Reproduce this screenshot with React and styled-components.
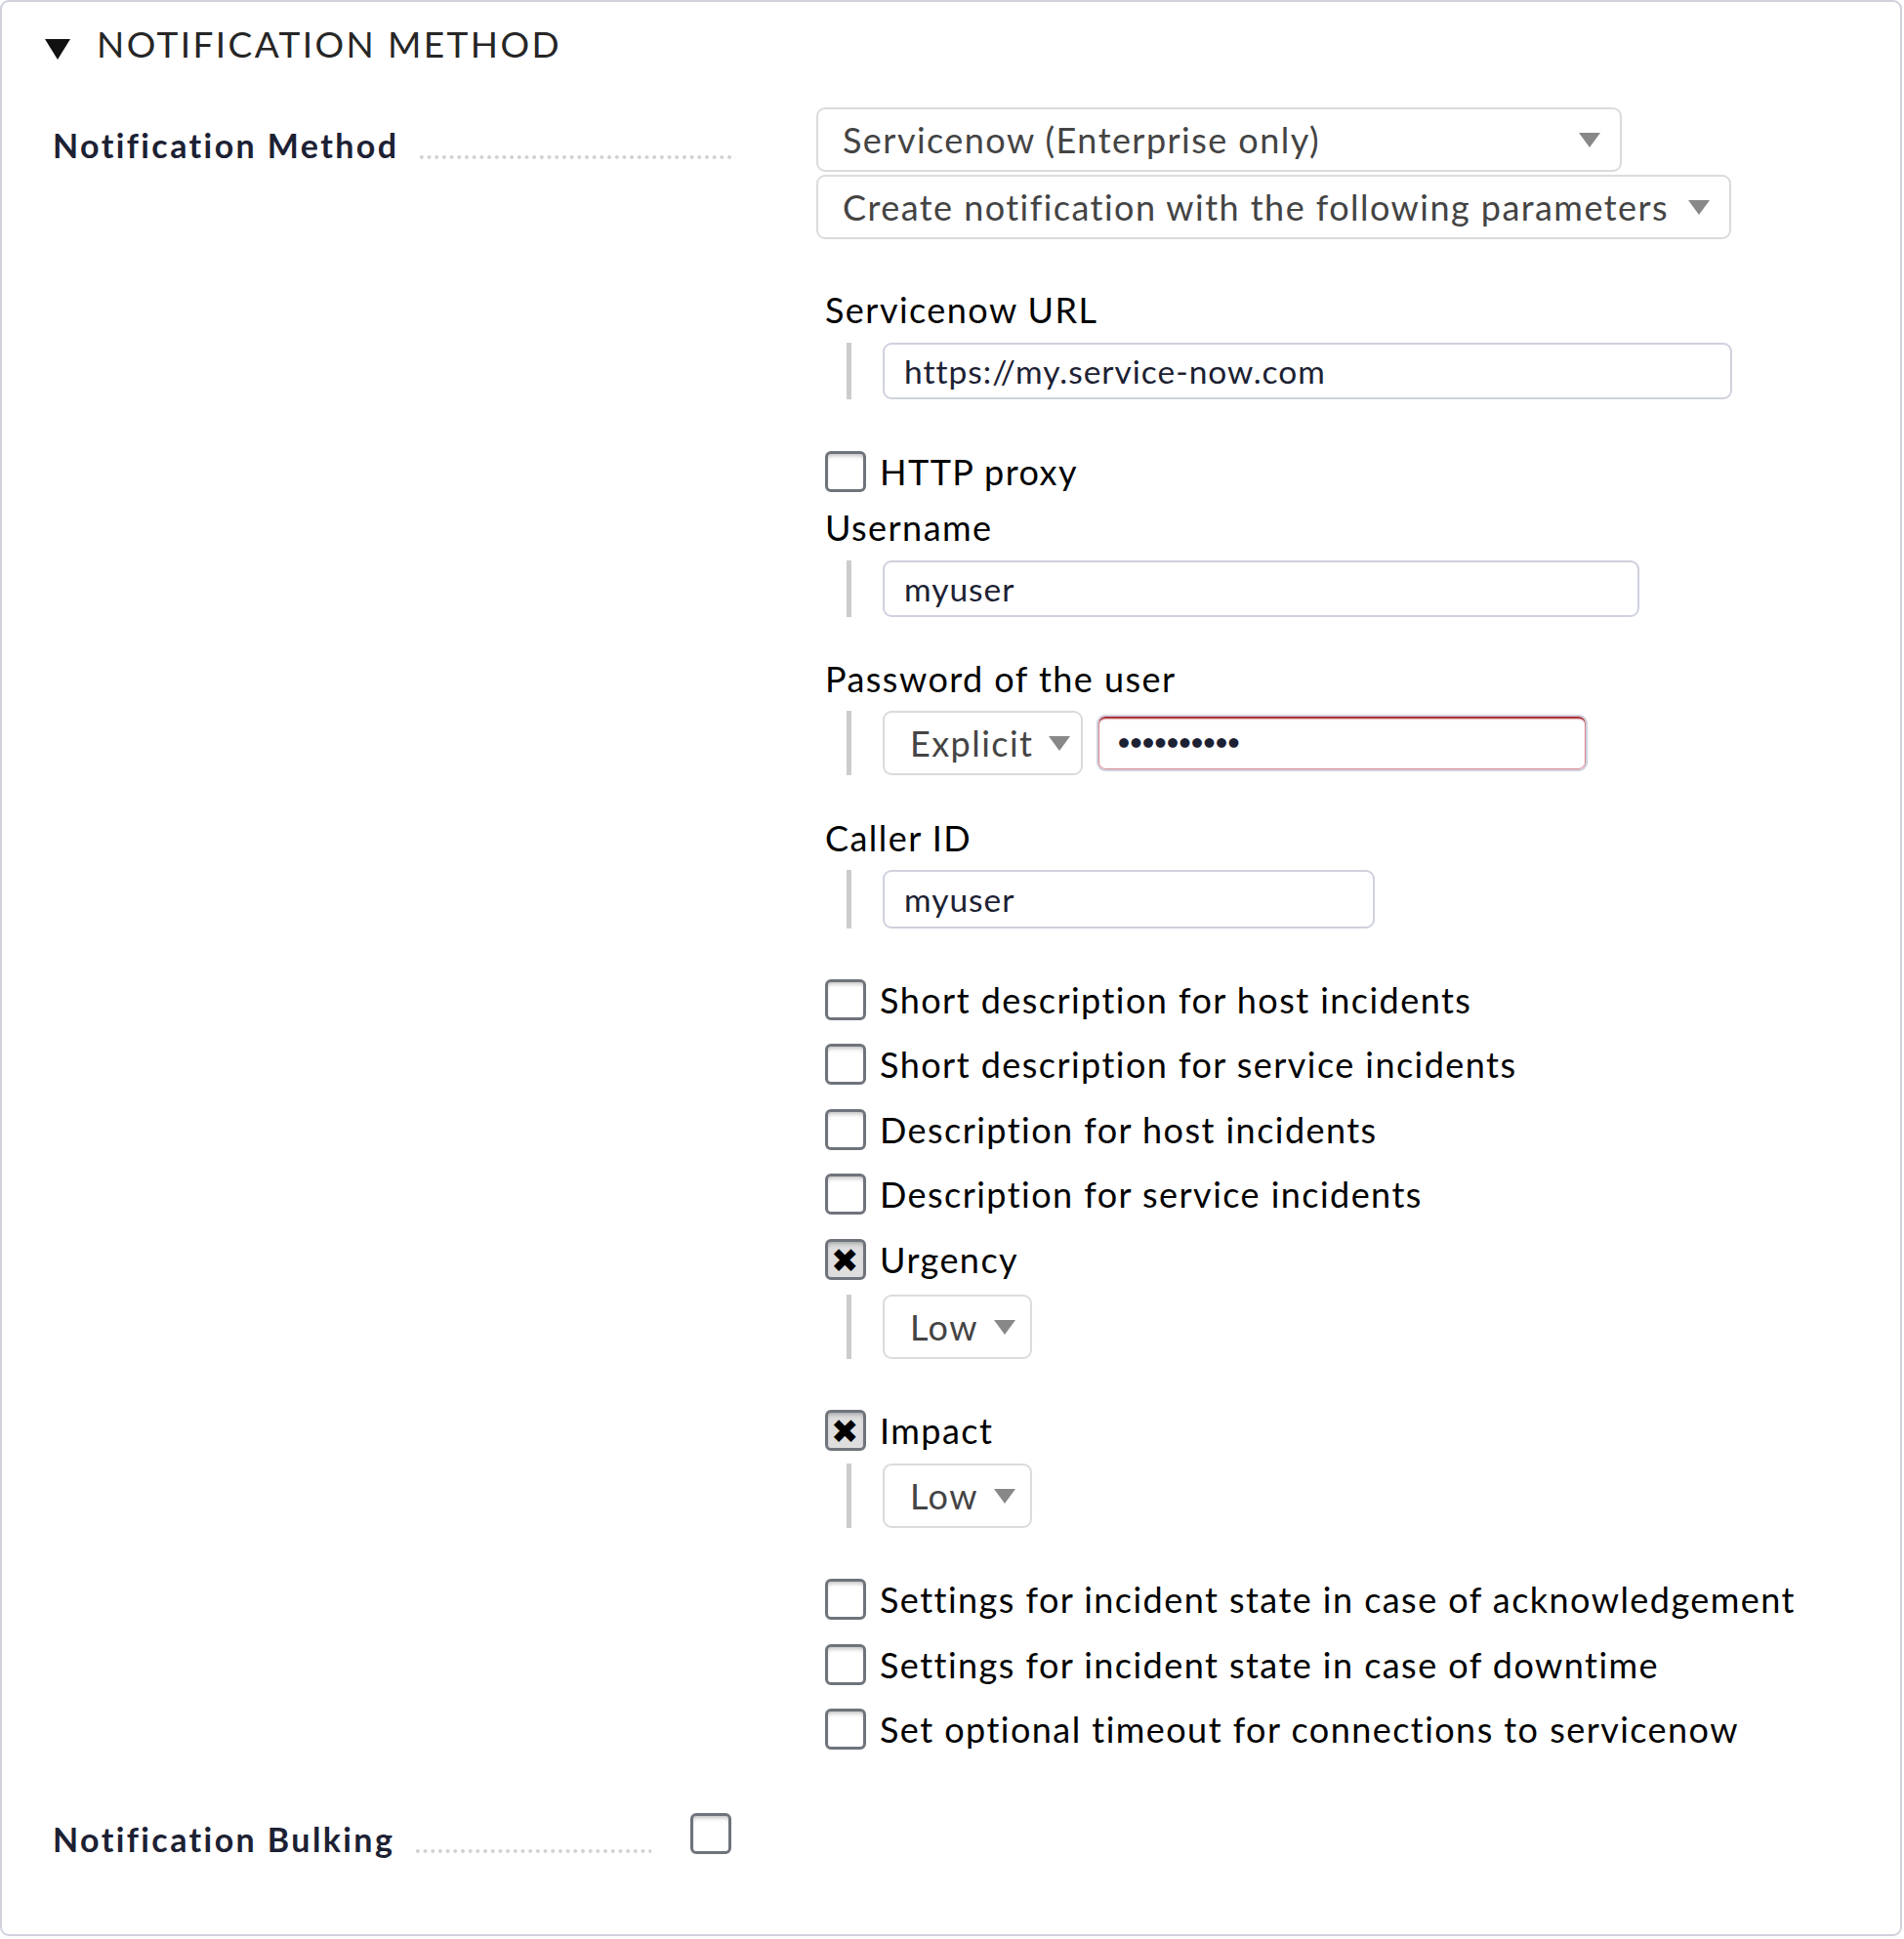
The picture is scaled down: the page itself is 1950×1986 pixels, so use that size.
import React from 'react'
import styled, { createGlobalStyle } from 'styled-components'

const GlobalStyle = createGlobalStyle`
    html, body {
        margin: 0;
        padding: 0;
        background: #ffffff;
    }
    body {
        font-family: Lato, "Noto Sans", sans-serif;
        color: #000;
    }
`;

const Panel = styled.div`
    box-sizing: border-box;
    width: 1948px;
    height: 1983px;
    border: 2px solid #cfd1dd;
    border-radius: 9px;
    padding: 14px 0 0 0;
`;

const Header = styled.div`
    display: flex;
    align-items: center;
    gap: 27px;
    padding-left: 44px;
    height: 56px;
    font-size: 37px;
    letter-spacing: 2.4px;
    color: #262626;
    text-transform: uppercase;
`;

const Toggle = styled.span`
    width: 0;
    height: 0;
    margin-top: 12px;
    border-left: 13px solid transparent;
    border-right: 13px solid transparent;
    border-top: 21px solid #111;
`;

const Row = styled.div`
    display: flex;
    align-items: flex-start;
    padding-left: 52px;
    margin-top: ${p => p.$top}px;
`;

const Legend = styled.div`
    display: flex;
    align-items: flex-end;
    width: ${p => p.$width}px;
    margin-right: ${p => p.$gap}px;
    height: ${p => p.$height}px;
    padding-bottom: ${p => p.$pad}px;
    box-sizing: border-box;
`;

const LegendText = styled.span`
    font-weight: 700;
    font-size: 34px;
    letter-spacing: 2.4px;
    color: #1c2133;
    white-space: nowrap;
    line-height: 38px;
`;

const Dots = styled.span`
    flex: 1;
    height: 6px;
    margin-left: 20px;
    margin-bottom: 4px;
    background-image: radial-gradient(circle, #d3d3d3 1.6px, transparent 2.2px);
    background-size: 7.7px 6px;
    background-repeat: repeat-x;
`;

const Content = styled.div`
    display: flex;
    flex-direction: column;
    align-items: flex-start;
`;

const Select = styled.div`
    box-sizing: border-box;
    display: flex;
    align-items: center;
    justify-content: space-between;
    gap: 16px;
    width: ${p => (p.$width ? `${p.$width}px` : 'auto')};
    height: ${p => p.$height || 66}px;
    padding: 0 20px 0 ${p => p.$padLeft || 25}px;
    margin-bottom: ${p => p.$bottom || 0}px;
    border: 2px solid #dbdbdb;
    border-radius: 9px;
    background: #fff;
    font-size: 36px;
    letter-spacing: 1.45px;
    color: #444;
    white-space: nowrap;
`;

const Arrow = styled.span`
    flex: none;
    width: 0;
    height: 0;
    border-left: 11px solid transparent;
    border-right: 11px solid transparent;
    border-top: 15px solid #888;
`;

const Params = styled.div`
    display: flex;
    flex-direction: column;
    align-items: flex-start;
    padding-left: 9px;
    padding-top: 52px;
`;

const Title = styled.div`
    font-size: 36px;
    letter-spacing: 1.45px;
    line-height: 40px;
    color: #000;
    margin-top: ${p => p.$top || 0}px;
`;

const Indent = styled.div`
    display: flex;
    align-items: center;
    gap: 14px;
    margin-top: ${p => p.$top || 14}px;
    margin-left: 22px;
    padding-left: 32px;
    border-left: 5px solid #cccccc;
`;

const TextInput = styled.div`
    box-sizing: border-box;
    display: flex;
    align-items: center;
    width: ${p => p.$width}px;
    height: ${p => p.$height || 58}px;
    padding-left: 20px;
    border: 2px solid #cfd1de;
    border-radius: 9px;
    font-size: 33.5px;
    letter-spacing: 1px;
    color: #1c2133;
    white-space: nowrap;
    box-shadow: ${p => (p.$error
        ? 'inset 0 3px 2px -1px #a3151c, inset 0 0 1px 1px rgba(190, 40, 50, 0.55)'
        : 'none')};
`;

const Dotted = styled.span`
    font-size: 20px;
    letter-spacing: 0.5px;
    margin-top: -4px;
    color: #1c2133;
`;

const CheckRow = styled.label`
    display: flex;
    align-items: center;
    gap: 14px;
    height: 42px;
    margin-top: ${p => p.$top || 0}px;
    font-size: 36px;
    letter-spacing: 1.45px;
    color: #000;
    white-space: nowrap;
`;

const Box = styled.span`
    box-sizing: border-box;
    flex: none;
    display: flex;
    align-items: center;
    justify-content: center;
    width: 42px;
    height: 42px;
    border: 3px solid #6f737b;
    border-radius: 6px;
    background: ${p => (p.$checked ? '#dedede' : '#fff')};
    box-shadow: inset 0 4px 4px -2px rgba(0, 0, 0, 0.25);
    font-size: 34px;
    line-height: 1;
    color: #000;
`;

const Checkbox = ({ checked, children, top }) => (
    <CheckRow $top={top}>
        <Box $checked={checked}>{checked ? '\u2716' : null}</Box>
        {children}
    </CheckRow>
);

const App = () => {
    return (
        <>
            <GlobalStyle />
            <Panel>
                <Header>
                    <Toggle />
                    <span>Notification Method</span>
                </Header>

                <Row $top={38}>
                    <Legend $width={699} $gap={83} $height={66} $pad={8}>
                        <LegendText>Notification Method</LegendText>
                        <Dots />
                    </Legend>
                    <Content>
                        <Select $width={825} $bottom={3}>
                            Servicenow (Enterprise only)
                            <Arrow />
                        </Select>
                        <Select $width={937}>
                            Create notification with the following parameters
                            <Arrow />
                        </Select>

                        <Params>
                            <Title>Servicenow URL</Title>
                            <Indent>
                                <TextInput $width={870}>https://my.service-now.com</TextInput>
                            </Indent>

                            <Checkbox top={53}>HTTP proxy</Checkbox>

                            <Title $top={16}>Username</Title>
                            <Indent>
                                <TextInput $width={775}>myuser</TextInput>
                            </Indent>

                            <Title $top={43}>Password of the user</Title>
                            <Indent $top={13}>
                                <Select $width={205} $padLeft={26}>
                                    Explicit
                                    <Arrow />
                                </Select>
                                <TextInput $width={503} $error>
                                    <Dotted>●●●●●●●●●●</Dotted>
                                </TextInput>
                            </Indent>

                            <Title $top={44}>Caller ID</Title>
                            <Indent $top={13}>
                                <TextInput $width={504} $height={60}>myuser</TextInput>
                            </Indent>

                            <Checkbox top={52}>Short description for host incidents</Checkbox>
                            <Checkbox top={24}>Short description for service incidents</Checkbox>
                            <Checkbox top={25}>Description for host incidents</Checkbox>
                            <Checkbox top={24}>Description for service incidents</Checkbox>
                            <Checkbox top={25} checked>Urgency</Checkbox>
                            <Indent $top={15}>
                                <Select $width={153} $padLeft={26}>
                                    Low
                                    <Arrow />
                                </Select>
                            </Indent>

                            <Checkbox top={52} checked>Impact</Checkbox>
                            <Indent $top={13}>
                                <Select $width={153} $padLeft={26}>
                                    Low
                                    <Arrow />
                                </Select>
                            </Indent>

                            <Checkbox top={52}>Settings for incident state in case of acknowledgement</Checkbox>
                            <Checkbox top={25}>Settings for incident state in case of downtime</Checkbox>
                            <Checkbox top={24}>Set optional timeout for connections to servicenow</Checkbox>
                        </Params>
                    </Content>
                </Row>

                <Row $top={65}>
                    <Legend $width={613} $gap={40} $height={46} $pad={0}>
                        <LegendText>Notification Bulking</LegendText>
                        <Dots />
                    </Legend>
                    <Box />
                </Row>
            </Panel>
        </>
    )
}

export default App
